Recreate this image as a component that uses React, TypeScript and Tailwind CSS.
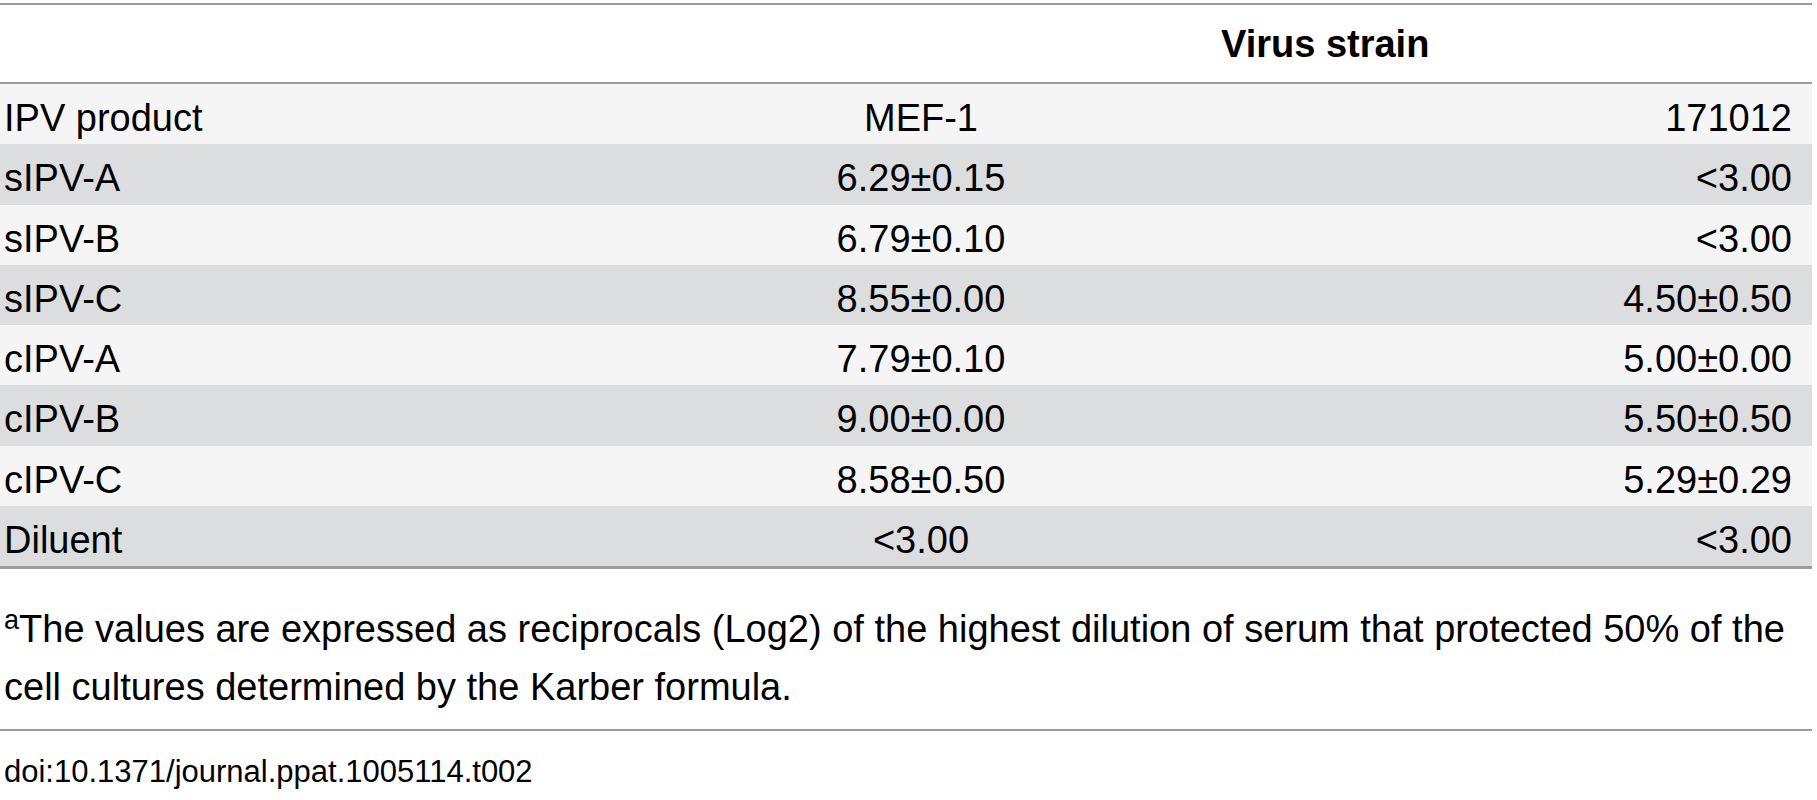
const rows: [string, string, string][] = [
  ["IPV product", "MEF-1", "171012"],
  ["sIPV-A", "6.29±0.15", "<3.00"],
  ["sIPV-B", "6.79±0.10", "<3.00"],
  ["sIPV-C", "8.55±0.00", "4.50±0.50"],
  ["cIPV-A", "7.79±0.10", "5.00±0.00"],
  ["cIPV-B", "9.00±0.00", "5.50±0.50"],
  ["cIPV-C", "8.58±0.50", "5.29±0.29"],
  ["Diluent", "<3.00", "<3.00"],
];

export default function App() {
  return (
    <div className="w-[1817px] h-[800px] overflow-hidden bg-white text-black font-['Liberation_Sans',Arial,sans-serif] text-[38px] leading-none">
      <div className="w-[1812px]">
        <div className="mt-[3px] border-t-2 border-[#9c9c9c]" />
        <div className="grid grid-cols-[621px_600px_1fr] h-[77px] pt-[20px] font-bold">
          <div />
          <div />
          <div>Virus strain</div>
        </div>
        <div className="border-t-2 border-[#9c9c9c]" />
        {rows.map((r, i) => (
          <div
            key={r[0]}
            className={`grid grid-cols-[621px_600px_1fr] h-[60.25px] items-center pt-[8px] ${i % 2 === 0 ? "bg-[#f5f5f5]" : "bg-[#dcdddf]"}`}
          >
            <div className="pl-[4px]">{r[0]}</div>
            <div className="text-center">{r[1]}</div>
            <div className="text-right pr-[20px]">{r[2]}</div>
          </div>
        ))}
        <div className="border-t-[3px] border-[#9c9c9c]" />
        <p className="pt-[31px] pb-[13px] pl-[4px] leading-[58px]">
          <sup className="text-[27px]">a</sup>The values are expressed as reciprocals (Log2) of the highest dilution of serum that protected 50% of the
          <br />
          cell cultures determined by the Karber formula.
        </p>
        <div className="border-t-2 border-[#9c9c9c]" />
        <div className="pt-[25px] pl-[4px] text-[31px]">doi:10.1371/journal.ppat.1005114.t002</div>
      </div>
    </div>
  );
}
